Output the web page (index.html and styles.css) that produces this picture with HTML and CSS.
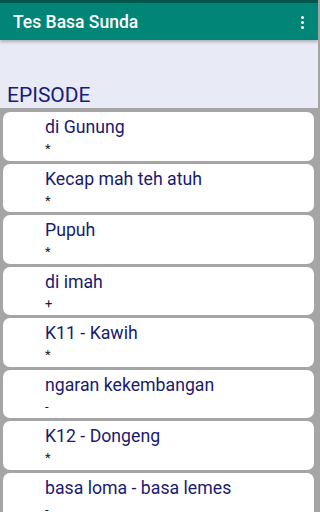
FILE: index.html
```html
<!DOCTYPE html>
<html>
<head>
<meta charset="utf-8">
<link rel="stylesheet" href="styles.css">
</head>
<body>
<div class="screen">
  <div class="statusbar"></div>
  <header class="appbar">
    <span class="title">Tes Basa Sunda</span>
    <span class="menu"><i></i><i></i><i></i></span>
  </header>
  <main class="content">
    <h1 class="heading">EPISODE</h1>
    <div class="list">
      <div class="card"><div class="t">di Gunung</div><div class="s">*</div></div>
      <div class="card"><div class="t">Kecap mah teh atuh</div><div class="s">*</div></div>
      <div class="card"><div class="t">Pupuh</div><div class="s">*</div></div>
      <div class="card"><div class="t">di imah</div><div class="s">+</div></div>
      <div class="card"><div class="t">K11 - Kawih</div><div class="s">*</div></div>
      <div class="card"><div class="t">ngaran kekembangan</div><div class="s">-</div></div>
      <div class="card"><div class="t">K12 - Dongeng</div><div class="s">*</div></div>
      <div class="card"><div class="t">basa loma - basa lemes</div><div class="s">-</div></div>
    </div>
  </main>
</div>
</body>
</html>
```
FILE: styles.css
```css
html, body {
  margin: 0;
  padding: 0;
}
body {
  font-family: Roboto, "Noto Sans", sans-serif;
  width: 318px;
  height: 512px;
  overflow: hidden;
  background: #a5a5a5;
}
.screen {
  display: flex;
  flex-direction: column;
  height: 512px;
  overflow: hidden;
}
.statusbar {
  height: 3px;
  flex-shrink: 0;
  background: #00574b;
}
.appbar {
  height: 37px;
  flex-shrink: 0;
  background: #008577;
  display: flex;
  align-items: center;
  justify-content: space-between;
  padding: 0 14px 0 13px;
  box-shadow: 0 2px 3px rgba(0,0,0,0.25);
  position: relative;
  z-index: 1;
}
.title {
  color: #fff;
  font-size: 17.5px;
  font-weight: 500;
  margin-top: 1px;
}
.menu {
  display: flex;
  flex-direction: column;
  gap: 1.5px;
  margin-top: 2px;
}
.menu i {
  display: block;
  width: 3.5px;
  height: 3.5px;
  border-radius: 50%;
  background: #fff;
}
.content {
  flex: 1;
  min-height: 0;
  background: #e8eaf6;
  display: flex;
  flex-direction: column;
  overflow: hidden;
}
.heading {
  margin: 0;
  padding: 42px 0 0 7px;
  font-size: 21px;
  line-height: 26px;
  height: 26px;
  flex-shrink: 0;
  font-weight: 400;
  color: #1a1a7a;
}
.list {
  flex: 1;
  background: #a5a5a5;
  padding: 4px 4px 0 3px;
  display: flex;
  flex-direction: column;
  gap: 3px;
}
.card {
  background: #fff;
  border-radius: 7px;
  height: 48.5px;
  flex-shrink: 0;
  box-sizing: border-box;
  padding: 5px 0 0 42px;
}
.t {
  font-size: 17.7px;
  line-height: 21px;
  color: #1a1a6e;
}
.s {
  font-size: 13px;
  line-height: 16px;
  color: #222;
  margin-top: 3px;
}
```
